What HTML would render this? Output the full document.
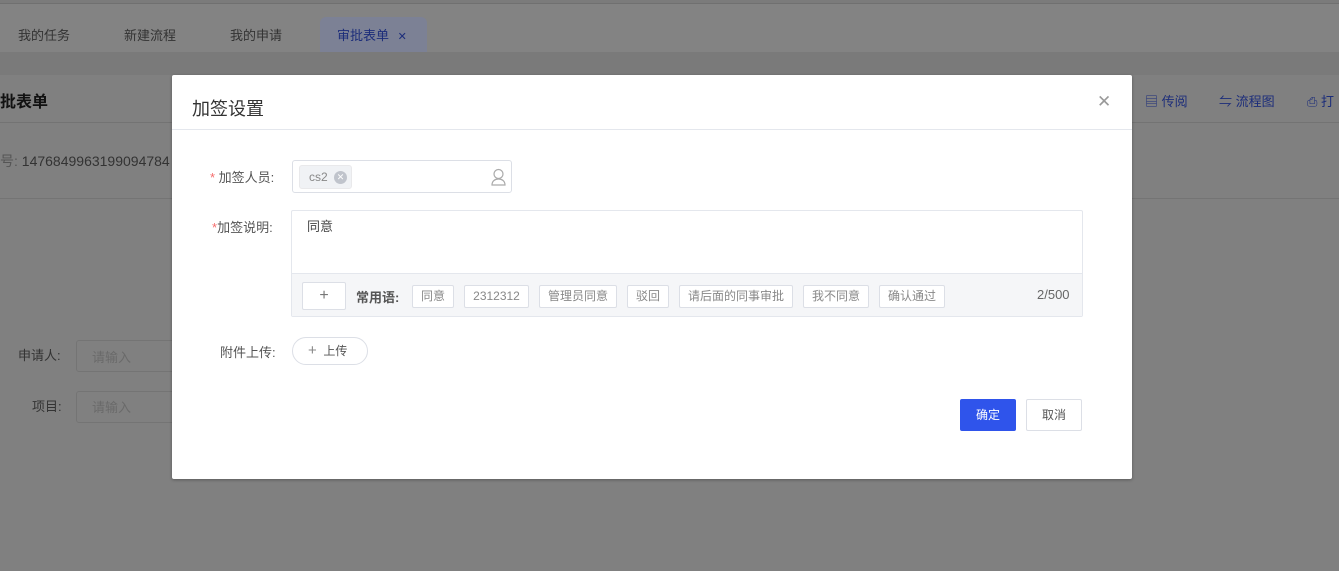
<!DOCTYPE html>
<html><head><meta charset="utf-8"><style>
*{box-sizing:border-box;margin:0;padding:0}
body{width:1339px;height:571px;overflow:hidden;background:#808080;font-family:"Liberation Sans","Noto Sans CJK SC",sans-serif;position:relative;font-size:13px;color:#2a2a2a}
.a{position:absolute;white-space:nowrap}
.chip{position:absolute;top:285px;height:23px;border:1px solid #dcdfe6;background:#fff;color:#888;font-size:12px;line-height:21px;text-align:center;border-radius:2px}
</style></head><body>
<div class="a" style="left:0;top:0;width:1339px;height:3px;background:#7b7b7b"></div>
<div class="a" style="left:0;top:3px;width:1339px;height:1px;background:#707070"></div>
<div class="a" style="left:0;top:4px;width:1339px;height:48px;background:#838383"></div>
<div class="a" style="left:0;top:52px;width:1339px;height:23px;background:#7a7a7a"></div>
<div class="a" style="left:18px;top:25px;color:#333;font-size:13px">我的任务</div>
<div class="a" style="left:124px;top:25px;color:#333;font-size:13px">新建流程</div>
<div class="a" style="left:230px;top:25px;color:#333;font-size:13px">我的申请</div>
<div class="a" style="left:320px;top:17px;width:107px;height:35px;background:#7c8195;border-radius:6px 6px 0 0"></div>
<div class="a" style="left:337px;top:25px;color:#1c2d7a;font-size:13px">审批表单 <span style="font-size:11px;margin-left:5px">✕</span></div>
<div class="a" style="left:0;top:88px;font-size:16px;font-weight:bold;color:#111">批表单</div>
<div class="a" style="left:0;top:122px;width:1339px;height:1px;background:#737373"></div>
<div class="a" style="left:0;top:151px;color:#333;font-size:14px"><span style="color:#555">号:</span> 1476849963199094784</div>
<div class="a" style="left:0;top:198px;width:1339px;height:1px;background:#747474"></div>
<div class="a" style="left:18px;top:345px;color:#333">申请人:</div>
<div class="a" style="left:76px;top:340px;width:110px;height:32px;border:1px solid #747474;border-radius:3px;color:#6a6a6a;padding:6px 15px">请输入</div>
<div class="a" style="left:32px;top:396px;color:#333">项目:</div>
<div class="a" style="left:76px;top:391px;width:110px;height:32px;border:1px solid #747474;border-radius:3px;color:#6a6a6a;padding:5px 15px">请输入</div>
<div class="a" style="left:1145px;top:91px;color:#1c2d7a;font-size:13px">▤ 传阅</div>
<div class="a" style="left:1219px;top:91px;color:#1c2d7a;font-size:13px">⇋ 流程图</div>
<div class="a" style="left:1307px;top:91px;color:#1c2d7a;font-size:13px">⎙ 打</div>

<div class="a" style="left:172px;top:75px;width:960px;height:404px;background:#fff;border-radius:2px;box-shadow:0 1px 3px rgba(0,0,0,.3)"></div>
<div class="a" style="left:192px;top:95px;font-size:18px;color:#333">加签设置</div>
<div class="a" style="left:1097px;top:92px;font-size:17px;color:#999">✕</div>
<div class="a" style="left:172px;top:129px;width:960px;height:1px;background:#e4e7ed"></div>

<div class="a" style="left:210px;top:167px;color:#555"><span style="color:#f56c6c">*</span> 加签人员:</div>
<div class="a" style="left:292px;top:160px;width:220px;height:33px;border:1px solid #dcdfe6;border-radius:3px"></div>
<div class="a" style="left:299px;top:165px;width:53px;height:24px;background:#f0f2f5;border:1px solid #e9e9eb;border-radius:3px;color:#888;font-size:12px;line-height:22px;padding-left:9px">cs2 <span style="display:inline-block;width:13px;height:13px;border-radius:50%;background:#c0c4cc;color:#fff;font-size:9px;line-height:13px;text-align:center;vertical-align:middle;margin-left:3px">✕</span></div>
<svg class="a" style="left:490px;top:168px" width="17" height="18" viewBox="0 0 17 18"><circle cx="8.5" cy="6" r="4.5" fill="none" stroke="#aaa" stroke-width="1.2"/><path d="M2 17c0-4 3-6 6.5-6s6.5 2 6.5 6z" fill="none" stroke="#aaa" stroke-width="1.2"/></svg>

<div class="a" style="left:212px;top:217px;color:#555"><span style="color:#f56c6c">*</span>加签说明:</div>
<div class="a" style="left:291px;top:210px;width:792px;height:107px;border:1px solid #e4e7ed;border-radius:2px;background:#fff"></div>
<div class="a" style="left:292px;top:273px;width:790px;height:43px;background:#f5f6f8;border-top:1px solid #e4e7ed"></div>
<div class="a" style="left:307px;top:216px;color:#444">同意</div>
<div class="a" style="left:302px;top:282px;width:44px;height:28px;background:#fff;border:1px solid #dcdfe6;border-radius:2px;text-align:center;line-height:26px;font-size:16px;color:#777">+</div>
<div class="a" style="left:356px;top:287px;color:#555;font-size:13px;font-weight:bold">常用语:</div>
<div class="chip" style="left:412px;width:42px">同意</div>
<div class="chip" style="left:464px;width:65px">2312312</div>
<div class="chip" style="left:539px;width:78px">管理员同意</div>
<div class="chip" style="left:627px;width:42px">驳回</div>
<div class="chip" style="left:679px;width:114px">请后面的同事审批</div>
<div class="chip" style="left:803px;width:66px">我不同意</div>
<div class="chip" style="left:879px;width:66px">确认通过</div>
<div class="a" style="left:1037px;top:287px;color:#666;font-size:13px">2/500</div>

<div class="a" style="left:220px;top:342px;color:#555">附件上传:</div>
<div class="a" style="left:292px;top:337px;width:76px;height:28px;border:1px solid #dcdfe6;border-radius:14px;color:#555;font-size:12px;line-height:26px;padding-left:15px"><span style="font-size:15px;color:#888">+</span>&nbsp; 上传</div>

<div class="a" style="left:960px;top:399px;width:56px;height:32px;background:#2f54eb;border-radius:2px;color:#fff;font-size:12px;line-height:32px;text-align:center">确定</div>
<div class="a" style="left:1026px;top:399px;width:56px;height:32px;background:#fff;border:1px solid #dcdfe6;border-radius:2px;color:#555;font-size:12px;line-height:30px;text-align:center">取消</div>
</body></html>
